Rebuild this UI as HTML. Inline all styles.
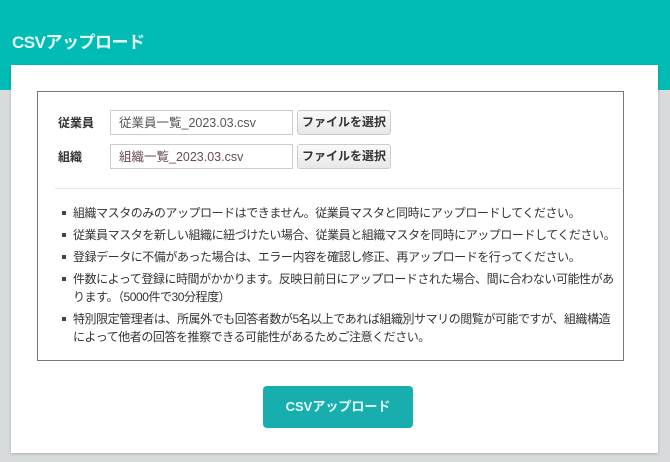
<!DOCTYPE html>
<html><head><meta charset="utf-8"><style>
*{margin:0;padding:0;box-sizing:border-box}
body{width:670px;height:462px;background:#d8dbdc;font-family:"Liberation Sans","Noto Sans CJK JP",sans-serif;position:relative;overflow:hidden;color:#333}
.hdr{position:absolute;left:0;top:0;width:670px;height:90px;background:#00bcb4}
.hdr h1{position:absolute;left:12px;top:28px;font-size:17px;color:#e8fffd;font-weight:bold;letter-spacing:-0.5px}
.panel{position:absolute;left:11px;top:65px;width:647px;height:388px;background:#fff;box-shadow:0 1px 3px rgba(0,0,0,.2)}
.box{position:absolute;left:37px;top:91px;width:587px;height:270px;border:1px solid #777;background:#fff}
.lbl{position:absolute;left:20px;font-size:12px;font-weight:bold;color:#333}
.inp{position:absolute;left:72px;width:183px;height:25px;border:1px solid #ccc;font-size:12.5px;color:#555;padding:4px 8px;line-height:16px}
.btn{position:absolute;left:259px;width:94px;height:25px;border:1px solid #ccc;border-radius:3px;background:linear-gradient(#fafafa,#e8e8e8);font-size:12px;font-weight:bold;text-align:center;line-height:23px;color:#333}
hr{position:absolute;left:17px;top:96px;width:566px;border:0;border-top:1px solid #e4e4e4}
ul{position:absolute;left:35px;top:112px;width:550px;list-style:none;font-size:12px;letter-spacing:-0.45px;line-height:18px;color:#333}
li{position:relative;margin-bottom:4px}
li:before{content:"";position:absolute;left:-11px;top:7px;width:4px;height:4px;background:#444}
.cta{position:absolute;left:263px;top:386px;width:150px;height:42px;background:#18aeae;border-radius:4px;color:#e8fffd;font-size:13px;font-weight:bold;text-align:center;line-height:42px}
</style></head><body>
<div class="hdr"><h1>CSVアップロード</h1></div>
<div class="panel"></div>
<div class="box">
<div class="lbl" style="top:22px">従業員</div>
<div class="inp" style="top:18px">従業員一覧_2023.03.csv</div>
<div class="btn" style="top:18px">ファイルを選択</div>
<div class="lbl" style="top:56px">組織</div>
<div class="inp" style="top:52px;color:#6b4a5a">組織一覧_2023.03.csv</div>
<div class="btn" style="top:52px">ファイルを選択</div>
<hr>
<ul>
<li>組織マスタのみのアップロードはできません。従業員マスタと同時にアップロードしてください。</li>
<li>従業員マスタを新しい組織に紐づけたい場合、従業員と組織マスタを同時にアップロードしてください。</li>
<li>登録データに不備があった場合は、エラー内容を確認し修正、再アップロードを行ってください。</li>
<li>件数によって登録に時間がかかります。反映日前日にアップロードされた場合、間に合わない可能性があります。（5000件で30分程度）</li>
<li>特別限定管理者は、所属外でも回答者数が5名以上であれば組織別サマリの閲覧が可能ですが、組織構造<br>によって他者の回答を推察できる可能性があるためご注意ください。</li>
</ul>
</div>
<div class="cta">CSVアップロード</div>
</body></html>
